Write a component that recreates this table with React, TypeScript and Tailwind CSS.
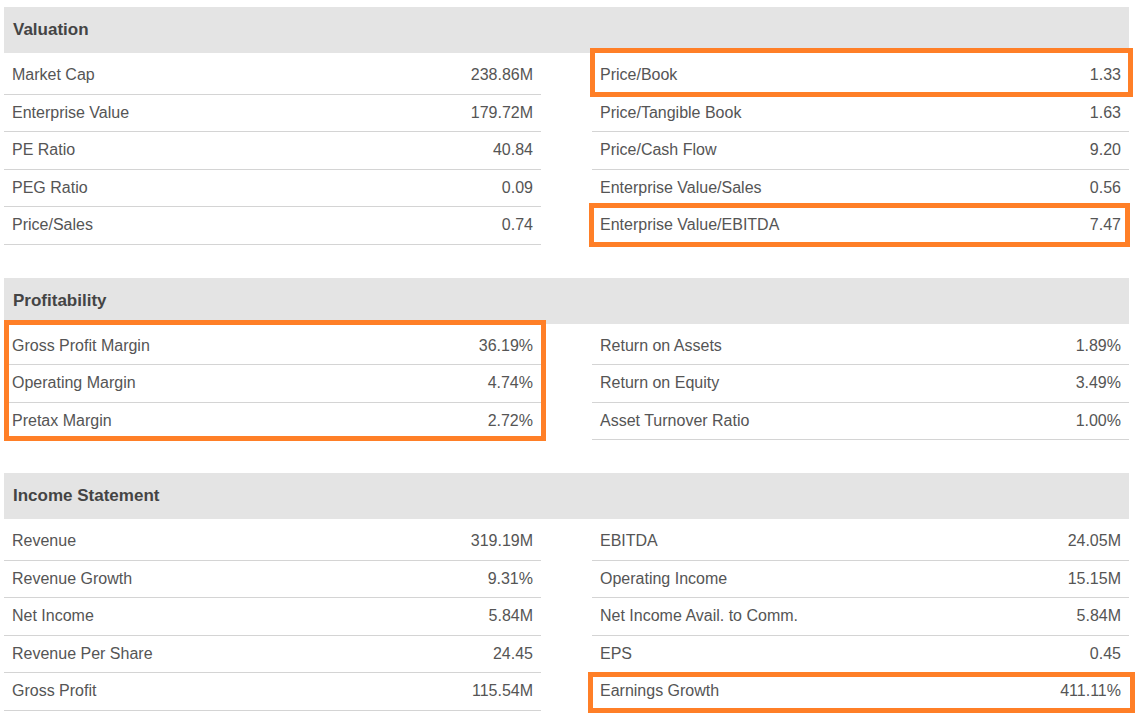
type Row = [string, string];

interface Section {
  title: string;
  left: Row[];
  right: Row[];
}

const sections: Section[] = [
  {
    title: 'Valuation',
    left: [
      ['Market Cap', '238.86M'],
      ['Enterprise Value', '179.72M'],
      ['PE Ratio', '40.84'],
      ['PEG Ratio', '0.09'],
      ['Price/Sales', '0.74'],
    ],
    right: [
      ['Price/Book', '1.33'],
      ['Price/Tangible Book', '1.63'],
      ['Price/Cash Flow', '9.20'],
      ['Enterprise Value/Sales', '0.56'],
      ['Enterprise Value/EBITDA', '7.47'],
    ],
  },
  {
    title: 'Profitability',
    left: [
      ['Gross Profit Margin', '36.19%'],
      ['Operating Margin', '4.74%'],
      ['Pretax Margin', '2.72%'],
    ],
    right: [
      ['Return on Assets', '1.89%'],
      ['Return on Equity', '3.49%'],
      ['Asset Turnover Ratio', '1.00%'],
    ],
  },
  {
    title: 'Income Statement',
    left: [
      ['Revenue', '319.19M'],
      ['Revenue Growth', '9.31%'],
      ['Net Income', '5.84M'],
      ['Revenue Per Share', '24.45'],
      ['Gross Profit', '115.54M'],
    ],
    right: [
      ['EBITDA', '24.05M'],
      ['Operating Income', '15.15M'],
      ['Net Income Avail. to Comm.', '5.84M'],
      ['EPS', '0.45'],
      ['Earnings Growth', '411.11%'],
    ],
  },
];

function StatTable({ rows }: { rows: Row[] }) {
  return (
    <div className="flex flex-col">
      {rows.map(([label, value]) => (
        <div
          key={label}
          className="flex h-[37.5px] items-center justify-between border-b border-[#d4d4d4] px-[8px]"
        >
          <span>{label}</span>
          <span>{value}</span>
        </div>
      ))}
    </div>
  );
}

export default function App() {
  return (
    <div
      className="relative min-h-[718px] bg-white pl-[4px] pt-[7px] text-[16px] text-[#555]"
      style={{ fontFamily: '"Liberation Sans", Arial, sans-serif' }}
    >
      <div className="w-[1125px]">
        {sections.map((section) => (
          <div key={section.title} className="mb-[33px]">
            <div className="flex h-[46px] items-center bg-[#e4e4e4] pl-[9px] text-[17px] font-bold text-[#444]">
              {section.title}
            </div>
            <div className="mt-[4px] grid grid-cols-[537px_537px] gap-x-[51px]">
              <StatTable rows={section.left} />
              <StatTable rows={section.right} />
            </div>
          </div>
        ))}
      </div>

      {/* highlight boxes drawn over the tables */}
      <div className="pointer-events-none absolute left-[590px] top-[48px] h-[49px] w-[543px] border-[5px] border-[#ff7f27]" />
      <div className="pointer-events-none absolute left-[589px] top-[203px] h-[44px] w-[541px] border-[5px] border-[#ff7f27]" />
      <div className="pointer-events-none absolute left-[4px] top-[320px] h-[121px] w-[542px] border-[5px] border-[#ff7f27]" />
      <div className="pointer-events-none absolute left-[588px] top-[672px] h-[41px] w-[547px] border-[5px] border-[#ff7f27]" />
    </div>
  );
}
